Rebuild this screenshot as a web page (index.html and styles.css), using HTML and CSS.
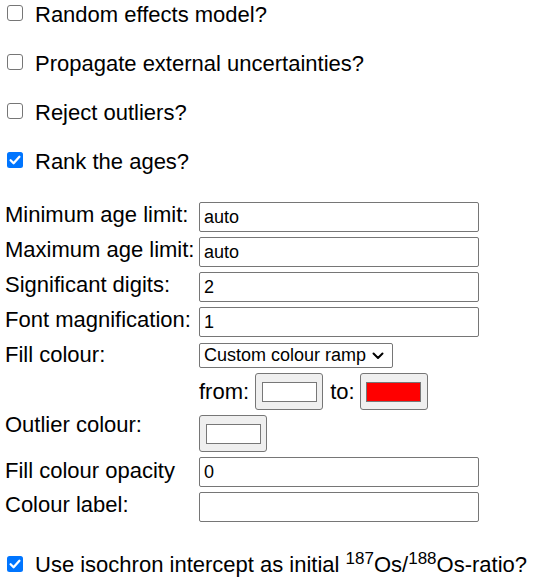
FILE: index.html
```html
<!DOCTYPE html>
<html>
<head>
<meta charset="utf-8">
<link rel="stylesheet" href="styles.css">
</head>
<body>
<div class="checks">
  <label class="check"><span class="box"><svg width="16" height="16" viewBox="0 0 16 16"><rect x="0.5" y="0.5" width="15" height="15" rx="2.5" fill="#fff" stroke="#767676"/></svg></span><span>Random effects model?</span></label>
  <label class="check"><span class="box"><svg width="16" height="16" viewBox="0 0 16 16"><rect x="0.5" y="0.5" width="15" height="15" rx="2.5" fill="#fff" stroke="#767676"/></svg></span><span>Propagate external uncertainties?</span></label>
  <label class="check"><span class="box"><svg width="16" height="16" viewBox="0 0 16 16"><rect x="0.5" y="0.5" width="15" height="15" rx="2.5" fill="#fff" stroke="#767676"/></svg></span><span>Reject outliers?</span></label>
  <label class="check"><span class="box"><svg width="16" height="16" viewBox="0 0 16 16"><rect x="0" y="0" width="16" height="16" rx="2.5" fill="#0075ff"/><path d="M3.6 8.2 L6.6 11.2 L12.4 4.8" fill="none" stroke="#fff" stroke-width="2.3" stroke-linecap="round" stroke-linejoin="round"/></svg></span><span>Rank the ages?</span></label>
</div>
<div class="form">
  <span class="lbl">Minimum age limit:</span>
  <input class="field" type="text" value="auto">
  <span class="lbl">Maximum age limit:</span>
  <input class="field" type="text" value="auto">
  <span class="lbl">Significant digits:</span>
  <input class="field" type="text" value="2">
  <span class="lbl">Font magnification:</span>
  <input class="field" type="text" value="1">
  <span class="lbl lbl-select">Fill colour:</span>
  <div class="selwrap">
    <select class="sel"><option>Custom colour ramp</option></select>
    <svg class="chev" width="12" height="8" viewBox="0 0 12 8"><path d="M1.5 1.5 L6 6 L10.5 1.5" fill="none" stroke="#000" stroke-width="2" stroke-linecap="round" stroke-linejoin="round"/></svg>
  </div>
  <span class="lbl"></span>
  <div class="ramp">
    <span class="ramp-text">from:</span>
    <button class="swatch-btn"><span class="swatch white"></span></button>
    <span class="ramp-text to">to:</span>
    <button class="swatch-btn"><span class="swatch red"></span></button>
  </div>
  <span class="lbl lbl-outlier">Outlier colour:</span>
  <div class="outlier">
    <button class="swatch-btn"><span class="swatch white"></span></button>
  </div>
  <span class="lbl lbl-opacity">Fill colour opacity</span>
  <input class="field" type="text" value="0">
  <span class="lbl">Colour label:</span>
  <input class="field" type="text" value="">
</div>
<label class="check last"><span class="box"><svg width="16" height="16" viewBox="0 0 16 16"><rect x="0" y="0" width="16" height="16" rx="2.5" fill="#0075ff"/><path d="M3.6 8.2 L6.6 11.2 L12.4 4.8" fill="none" stroke="#fff" stroke-width="2.3" stroke-linecap="round" stroke-linejoin="round"/></svg></span><span>Use isochron intercept as initial <sup>187</sup>Os/<sup>188</sup>Os-ratio?</span></label>
</body>
</html>
```
FILE: styles.css
```css
html, body {
  margin: 0;
  padding: 0;
  background: #ffffff;
}
body {
  font-family: "Liberation Sans", Arial, sans-serif;
  color: #000000;
  font-size: 22px;
  padding-left: 5px;
}
.checks {
  display: flex;
  flex-direction: column;
  gap: 24px;
  padding-top: 2px;
}
.check {
  display: flex;
  align-items: flex-start;
  height: 25px;
  line-height: 25px;
  font-size: 22px;
  white-space: nowrap;
}
.box {
  display: block;
  width: 16px;
  height: 16px;
  margin: 3px 12px 0 2px;
  flex: none;
}
.box svg {
  display: block;
}
.check sup {
  font-size: 17px;
  line-height: 0;
  vertical-align: 8px;
}
.form {
  margin-top: 28px;
  display: grid;
  grid-template-columns: 194px 280px;
  row-gap: 5px;
  align-items: start;
}
.lbl {
  line-height: 25px;
  font-size: 22px;
  white-space: nowrap;
}
.lbl-outlier { margin-top: -3px; }
.lbl-opacity { margin-top: 1px; }
.field {
  display: block;
  box-sizing: border-box;
  width: 280px;
  height: 30px;
  margin: 0;
  padding: 0 4px;
  border: 1px solid #767676;
  border-radius: 2px;
  font-family: "Liberation Sans", Arial, sans-serif;
  font-size: 18px;
  color: #000;
  background: #fff;
}
.selwrap {
  position: relative;
  padding-top: 1px;
  width: 194px;
}
.sel {
  display: block;
  -webkit-appearance: none;
  appearance: none;
  box-sizing: border-box;
  width: 194px;
  height: 25px;
  margin: 0;
  font-family: "Liberation Sans", Arial, sans-serif;
  font-size: 18px;
  line-height: 23px;
  color: #000;
  border: 1px solid #767676;
  border-radius: 2px;
  background: #fff;
  padding: 0 4px;
}
.chev {
  position: absolute;
  left: 173px;
  top: 10px;
  pointer-events: none;
}
.ramp {
  display: flex;
  align-items: center;
  height: 37px;
}
.ramp-text {
  font-size: 22px;
  line-height: 25px;
  margin-right: 6px;
}
.ramp-text.to {
  margin-left: 7px;
  margin-right: 5px;
}
.swatch-btn {
  box-sizing: border-box;
  width: 68px;
  height: 37px;
  margin: 0;
  padding: 0;
  background: #efefef;
  border: 1px solid #767676;
  border-radius: 3px;
  display: flex;
  align-items: center;
  justify-content: center;
  flex: none;
}
.swatch {
  display: block;
  box-sizing: border-box;
  width: 55px;
  height: 20px;
  border: 1px solid #777777;
}
.swatch.white { background: #ffffff; }
.swatch.red { background: #ff0000; }
.outlier {
  height: 37px;
  display: flex;
}
.check.last {
  margin-top: 30px;
}
.check.last .box {
  margin-top: 4px;
}
```
